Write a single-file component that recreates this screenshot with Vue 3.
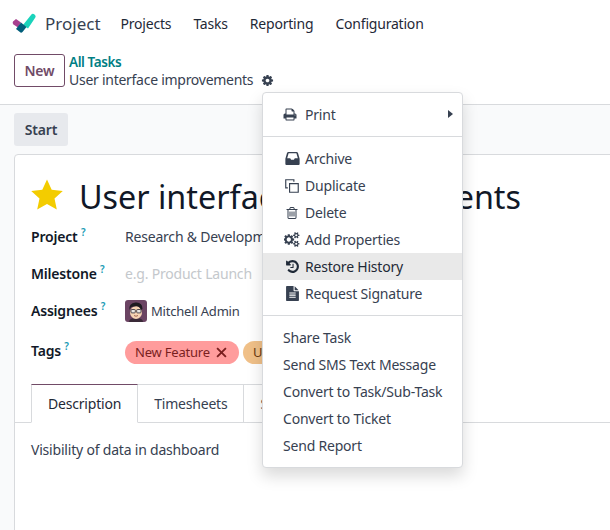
<template>
  <div class="page">
    <header class="navbar">
      <svg class="logo" viewBox="0 0 24 22" width="24" height="22">
        <path d="M12 14l8-10a2.500 2.500 0 0 1 4 3l-7 10.500z" fill="#1ad3bb" transform="translate(-1 -1)" />
        <path d="M1 9.500l3-2.500 5 3.500-3 5-4.500-3q-1.500-1.500-.5-3z" fill="#a8408f" />
        <path d="M9 10.500l5.500 4.500-4 5q-1 1-2 .5l-4.500-3.500z" fill="#005e7a" />
      </svg>
      <span class="brand">Project</span>
      <a v-for="item in navItems" :key="item" class="nav-link">{{ item }}</a>
    </header>

    <section class="control">
      <button class="btn-new">New</button>
      <div class="crumbs">
        <a class="crumb-link">All Tasks</a>
        <div class="crumb-current">
          <span>User interface improvements</span>
          <svg class="gear" viewBox="0 0 1792 1792" width="13" height="13"><path :d="icons.cog" /></svg>
        </div>
      </div>
    </section>

    <div class="statusbar">
      <button class="btn-start">Start</button>
    </div>

    <main class="sheet">
      <div class="title-row">
        <svg class="star" viewBox="0 0 32 31" width="32" height="31">
          <path d="M16 .5l4.700 10.300 11.100 1.200-8.300 7.500 2.300 11-9.800-5.600-9.800 5.600 2.300-11L.2 12l11.100-1.200z" fill="#f3cc00" />
        </svg>
        <h1>User interface improvements</h1>
      </div>

      <div class="field">
        <label>Project <sup>?</sup></label>
        <span class="value">Research &amp; Development</span>
      </div>
      <div class="field">
        <label>Milestone <sup>?</sup></label>
        <span class="value placeholder">e.g. Product Launch</span>
      </div>
      <div class="field">
        <label>Assignees <sup>?</sup></label>
        <span class="value assignee">
          <svg class="avatar" viewBox="0 0 22 22" width="22" height="22">
            <rect width="22" height="22" rx="3" fill="#6b4463" />
            <path d="M4 22q0-4 7-4t7 4z" fill="#3a2a38" />
            <ellipse cx="11" cy="12.500" rx="6" ry="6.500" fill="#f6d3b3" />
            <path d="M4.500 10q-1-7 6-7.500t7 6.500l-1.500 1q-1-3-3-3.500t-7 .5z" fill="#1d1a20" />
            <rect x="6" y="9.500" width="4.300" height="3.400" rx=".8" fill="#e9e6e2" stroke="#2a2630" stroke-width=".8" />
            <rect x="11.700" y="9.500" width="4.300" height="3.400" rx=".8" fill="#e9e6e2" stroke="#2a2630" stroke-width=".8" />
            <path d="M9 15.500q2 1.500 4 0" fill="none" stroke="#8a4a3a" stroke-width=".8" />
          </svg>
          Mitchell Admin
        </span>
      </div>
      <div class="field tags-field">
        <label>Tags <sup>?</sup></label>
        <span class="tags">
          <span class="tag tag-red">New Feature
            <svg viewBox="0 0 10 10" width="11" height="11"><path d="M1 1l8 8M9 1l-8 8" stroke="#7a1f1f" stroke-width="1.700" /></svg>
          </span>
          <span class="tag tag-orange">Urgent</span>
        </span>
      </div>

      <nav class="tabs">
        <a class="tab active">Description</a>
        <a class="tab">Timesheets</a>
        <a class="tab">Sub-tasks</a>
      </nav>
      <p class="description">Visibility of data in dashboard</p>
    </main>

    <div class="menu">
      <template v-for="(group, i) in menuGroups" :key="i">
        <hr v-if="i > 0" />
        <a v-for="item in group" :key="item.label" class="menu-item" :class="{ hovered: item.hovered }">
          <span v-if="item.icon" class="icon-box" :class="'icon-' + item.icon">
            <svg :viewBox="item.box || '0 0 1792 1792'" :width="item.w" :height="item.h"><path :d="icons[item.icon]" /></svg>
          </span>
          <span>{{ item.label }}</span>
          <span v-if="item.caret" class="caret"></span>
        </a>
      </template>
    </div>
  </div>
</template>

<script setup>
const navItems = ['Projects', 'Tasks', 'Reporting', 'Configuration']

const icons = {
  cog: 'M1152 896q0-106-75-181t-181-75-181 75-75 181 75 181 181 75 181-75 75-181zm512-109v222q0 12-8 23t-20 13l-185 28q-19 54-39 91 35 50 107 138 10 12 10 25t-9 23q-27 37-99 108t-94 71q-12 0-26-9l-138-108q-44 23-91 38-16 136-29 186-7 28-36 28h-222q-14 0-24.500-8.500t-11.500-21.500l-28-184q-49-16-90-37l-141 107q-10 9-25 9-14 0-25-11-126-114-165-168-7-10-7-23 0-12 8-23 15-21 51-66.500t54-70.500q-27-50-41-99l-183-27q-13-2-21-12.500t-8-23.500v-222q0-12 8-23t19-13l186-28q14-46 39-92-40-57-107-138-10-12-10-24 0-10 9-23 26-36 98.500-107.500t94.500-71.500q13 0 26 10l138 107q44-23 91-38 16-136 29-186 7-28 36-28h222q14 0 24.500 8.500t11.500 21.500l28 184q49 16 90 37l142-107q9-9 24-9 13 0 25 10 129 119 165 170 7 8 7 22 0 12-8 23-15 21-51 66.500t-54 70.500q26 50 41 98l183 28q13 2 21 12.500t8 23.500z',
  print: 'M448 1536h896v-256h-896v256zm0-640h896v-384h-160q-40 0-68-28t-28-68v-160h-640v640zm1152 64q0-26-19-45t-45-19-45 19-19 45 19 45 45 19 45-19 19-45zm128 0v416q0 13-9.500 22.500t-22.500 9.500h-224v160q0 40-28 68t-68 28h-960q-40 0-68-28t-28-68v-160h-224q-13 0-22.500-9.500t-9.500-22.500v-416q0-79 56.500-135.500t135.500-56.500h64v-544q0-40 28-68t68-28h672q40 0 88 20t76 48l152 152q28 28 48 76t20 88v256h64q79 0 135.500 56.500t56.500 135.500z',
  inbox: 'M400 130h992q110 0 160 100l170 620q26 70 26 130v560q0 120-120 120H164q-120 0-120-120V980q0-60 26-130l170-620q50-100 160-100zm30 150L260 860h360l110 190h332l110-190h360L1362 280z',
  copy: 'M130 130h1040v300h-130V260H260v780h170v130H130zM560 560h1100v1100H560zm130 130v840h840V690z',
  trash: 'M704 736v576q0 14-9 23t-23 9h-64q-14 0-23-9t-9-23v-576q0-14 9-23t23-9h64q14 0 23 9t9 23zm256 0v576q0 14-9 23t-23 9h-64q-14 0-23-9t-9-23v-576q0-14 9-23t23-9h64q14 0 23 9t9 23zm256 0v576q0 14-9 23t-23 9h-64q-14 0-23-9t-9-23v-576q0-14 9-23t23-9h64q14 0 23 9t9 23zm128 724v-948h-896v948q0 22 7 40.500t14.500 27 10.500 8.500h832q3 0 10.500-8.500t14.500-27 7-40.500zm-672-1076h448l-48-117q-7-9-17-11h-317q-10 2-17 11zm928 32v64q0 14-9 23t-23 9h-96v948q0 83-47 143.500t-113 60.500h-832q-66 0-113-58.500t-47-141.500v-952h-96q-14 0-23-9t-9-23v-64q0-14 9-23t23-9h309l70-167q15-37 54-63t79-26h320q40 0 79 26t54 63l70 167h309q14 0 23 9t9 23z',
  cogs: 'M832 896q0-106-75-181t-181-75-181 75-75 181 75 181 181 75 181-75 75-181zm768 512q0-52-38-90t-90-38-90 38-38 90q0 53 37.500 90.500t90.500 37.500 90.500-37.500 37.500-90.500zm0-1024q0-52-38-90t-90-38-90 38-38 90q0 53 37.500 90.500t90.500 37.500 90.500-37.500 37.500-90.500zm-384 421v185q0 10-7 19.500t-16 10.500l-155 24q-11 35-32 76 34 48 90 115 7 11 7 20 0 12-7 19-23 30-82.500 89.500t-78.500 59.500q-11 0-21-7l-115-90q-37 19-77 31-11 108-23 155-7 24-30 24h-186q-11 0-20-7.500t-10-17.500l-23-153q-34-10-75-31l-118 89q-7 7-20 7-11 0-21-8-144-133-144-160 0-9 7-19 10-14 41-53t47-61q-23-44-35-82l-152-24q-10-1-17-9.500t-7-19.500v-185q0-10 7-19.500t16-10.500l155-24q11-35 32-76-34-48-90-115-7-11-7-20 0-12 7-20 22-30 82-89t79-59q11 0 21 7l115 90q34-18 77-32 11-108 23-154 7-24 30-24h186q11 0 20 7.500t10 17.500l23 153q34 10 75 31l118-89q8-7 20-7 11 0 21 8 144 133 144 160 0 8-7 19-12 16-42 54t-45 60q23 48 34 82l152 23q10 2 17 10.500t7 19.500zm640 533v140q0 16-149 31-12 27-30 52 51 113 51 138 0 4-4 7-122 71-124 71-8 0-46-47t-52-68q-20 2-30 2t-30-2q-14 21-52 68t-46 47q-2 0-124-71-4-3-4-7 0-25 51-138-18-25-30-52-149-15-149-31v-140q0-16 149-31 13-29 30-52-51-113-51-138 0-4 4-7 4-2 35-20t59-34 30-16q8 0 46 46.500t52 67.500q20-2 30-2t30 2q51-71 92-112l6-2q4 0 124 70 4 3 4 7 0 25-51 138 17 23 30 52 149 15 149 31zm0-1024v140q0 16-149 31-12 27-30 52 51 113 51 138 0 4-4 7-122 71-124 71-8 0-46-47t-52-68q-20 2-30 2t-30-2q-14 21-52 68t-46 47q-2 0-124-71-4-3-4-7 0-25 51-138-18-25-30-52-149-15-149-31v-140q0-16 149-31 13-29 30-52-51-113-51-138 0-4 4-7 4-2 35-20t59-34 30-16q8 0 46 46.500t52 67.500q20-2 30-2t30 2q51-71 92-112l6-2q4 0 124 70 4 3 4 7 0 25-51 138 17 23 30 52 149 15 149 31z',
  history: 'M1664 896q0 156-61 298t-164 245-245 164-298 61q-172 0-327-72.500t-264-204.500q-7-10-6.500-22.500t8.500-20.500l137-138q10-9 25-9 16 2 23 12 73 95 179 147t225 52q104 0 198.500-40.500t163.500-109.500 109.500-163.500 40.500-198.500-40.500-198.500-109.500-163.500-163.500-109.500-198.500-40.500q-98 0-188 35.500t-160 101.500l137 138q31 30 14 69-17 40-59 40h-448q-26 0-45-19t-19-45v-448q0-42 40-59 39-17 69 14l130 129q107-101 244.500-156.500t284.500-55.500q156 0 298 61t245 164 164 245 61 298zm-640-288v448q0 14-9 23t-23 9h-320q-14 0-23-9t-9-23v-64q0-14 9-23t23-9h224v-352q0-14 9-23t23-9h64q14 0 23 9t9 23z',
  file: 'M1596 476q14 14 28 36h-472v-472q22 14 36 28zm-476 164h544v1056q0 40-28 68t-68 28h-1344q-40 0-68-28t-28-68v-1600q0-40 28-68t68-28h800v544q0 40 28 68t68 28zm160 736v-64q0-14-9-23t-23-9h-704q-14 0-23 9t-9 23v64q0 14 9 23t23 9h704q14 0 23-9t9-23zm0-256v-64q0-14-9-23t-23-9h-704q-14 0-23 9t-9 23v64q0 14 9 23t23 9h704q14 0 23-9t9-23zm0-256v-64q0-14-9-23t-23-9h-704q-14 0-23 9t-9 23v64q0 14 9 23t23 9h704q14 0 23-9t9-23z'
}

const menuGroups = [
  [{ label: 'Print', icon: 'print', w: 15, h: 15, caret: true }],
  [
    { label: 'Archive', icon: 'inbox', w: 15, h: 15 },
    { label: 'Duplicate', icon: 'copy', w: 16, h: 16 },
    { label: 'Delete', icon: 'trash', w: 14, h: 14 },
    { label: 'Add Properties', icon: 'cogs', box: '0 0 1920 1792', w: 16, h: 15 },
    { label: 'Restore History', icon: 'history', w: 15, h: 15, hovered: true },
    { label: 'Request Signature', icon: 'file', w: 15, h: 15 }
  ],
  [
    { label: 'Share Task' },
    { label: 'Send SMS Text Message' },
    { label: 'Convert to Task/Sub-Task' },
    { label: 'Convert to Ticket' },
    { label: 'Send Report' }
  ]
]
</script>

<style scoped>
.page {
  position: relative;
  width: 610px;
  height: 530px;
  overflow: hidden;
  background: #f9fafb;
  font-family: "Noto Sans", sans-serif;
  font-size: 14px;
  letter-spacing: -.2px;
  color: #374151;
}

.navbar {
  display: flex;
  align-items: center;
  height: 46px;
  background: #fff;
  padding-left: 12px;
}
.logo {
  margin-right: 9px;
}
.brand {
  font-size: 17px;
  letter-spacing: 0;
  margin-right: 20px;
}
.nav-link {
  margin-right: 22px;
  color: #1f2937;
}

.control {
  display: flex;
  align-items: flex-start;
  gap: 4px;
  height: 50px;
  padding: 8px 14px 0;
  background: #fff;
  border-bottom: 1px solid #d8dadd;
  box-sizing: content-box;
}
.btn-new {
  width: 51px;
  height: 33px;
  padding: 0;
  background: #fff;
  border: 1px solid #714b67;
  border-radius: 3px;
  font: 600 14px "Noto Sans", sans-serif;
  letter-spacing: inherit;
  color: #714b67;
}
.crumbs {
  margin-top: -1px;
  line-height: 18px;
}
.crumb-link {
  display: block;
  color: #017e84;
  font-weight: 600;
  font-size: 13.500px;
  letter-spacing: -.4px;
}
.crumb-current {
  display: flex;
  align-items: center;
  gap: 8px;
  letter-spacing: -.27px;
}
.gear {
  fill: #374151;
}

.statusbar {
  height: 49px;
  padding: 8px 0 0 14px;
  box-sizing: border-box;
}
.btn-start {
  width: 54px;
  height: 33px;
  padding: 0;
  background: #e7e9ed;
  border: 0;
  border-radius: 3px;
  font: 600 14px "Noto Sans", sans-serif;
  letter-spacing: inherit;
  color: #374151;
}

.sheet {
  margin-left: 14px;
  width: 640px;
  height: 400px;
  background: #fff;
  border: 1px solid #d8dadd;
  border-radius: 4px 0 0 0;
  box-sizing: border-box;
  padding-top: 25px;
}
.title-row {
  display: flex;
  align-items: flex-start;
  gap: 16px;
  height: 32px;
  padding-left: 16px;
  margin-bottom: 6px;
}
.star {
  margin-top: -1px;
}
h1 {
  margin: 0;
  font-size: 32.300px;
  line-height: 32px;
  font-weight: 400;
  letter-spacing: 0;
  color: #111827;
  white-space: nowrap;
}

.field {
  display: flex;
  align-items: center;
  height: 37px;
  padding-left: 16px;
}
.field label {
  width: 94px;
  font-weight: 600;
  color: #111827;
}
.field sup {
  font-size: 10px;
  font-weight: 600;
  color: #1a9bb5;
  line-height: 0;
}
.value {
  white-space: nowrap;
}
.placeholder {
  color: #c4c8cc;
}
.assignee {
  display: flex;
  align-items: center;
  gap: 4px;
  font-size: 13px;
}
.avatar {
  display: block;
}
.tags-field {
  height: 46px;
}
.tags-field label {
  margin-bottom: 3px;
}
.tags {
  display: flex;
  gap: 4px;
}
.tag {
  display: flex;
  align-items: center;
  gap: 6px;
  height: 23px;
  padding: 0 12px 0 10px;
  border-radius: 12px;
  font-size: 13px;
  color: #7a1f1f;
  white-space: nowrap;
}
.tag-red {
  background: #ff9c9c;
}
.tag-orange {
  background: #f0c088;
  color: #6a3a10;
}

.tabs {
  display: flex;
  height: 39px;
  margin-top: 9px;
  padding-left: 16px;
  border-bottom: 1px solid #d8dadd;
  box-sizing: border-box;
}
.tab {
  height: 39px;
  padding: 0 16px;
  line-height: 38px;
  box-sizing: border-box;
  border: 1px solid #d8dadd;
  border-left: 0;
  background: #fff;
}
.tab.active {
  border-left: 1px solid #d8dadd;
  border-top-color: #714b67;
  border-bottom-color: #fff;
  color: #1f2937;
}
.description {
  margin: 17px 0 0 16px;
}

.menu {
  position: absolute;
  left: 262px;
  top: 92px;
  width: 201px;
  padding: 8px 0;
  box-sizing: border-box;
  background: #fff;
  border: 1px solid #d8dadd;
  border-radius: 4px;
  box-shadow: 0 8px 16px rgba(0, 0, 0, .15);
}
.menu hr {
  margin: 8px 0;
  border: 0;
  border-top: 1px solid #d8dadd;
}
.menu-item {
  position: relative;
  display: flex;
  align-items: center;
  height: 27px;
  padding-left: 20px;
  white-space: nowrap;
}
.menu-item.hovered {
  background: #e9e9e9;
  color: #1f2937;
}
.icon-box {
  display: flex;
  justify-content: center;
  width: 18px;
  margin-right: 4px;
  fill: currentColor;
}
.icon-print svg {
  margin-right: 4px;
}
.caret {
  position: absolute;
  right: 9px;
  top: 9px;
  border-left: 5px solid #374151;
  border-top: 4.500px solid transparent;
  border-bottom: 4.500px solid transparent;
}
</style>

<style>
body {
  background: #fff;
}
</style>
